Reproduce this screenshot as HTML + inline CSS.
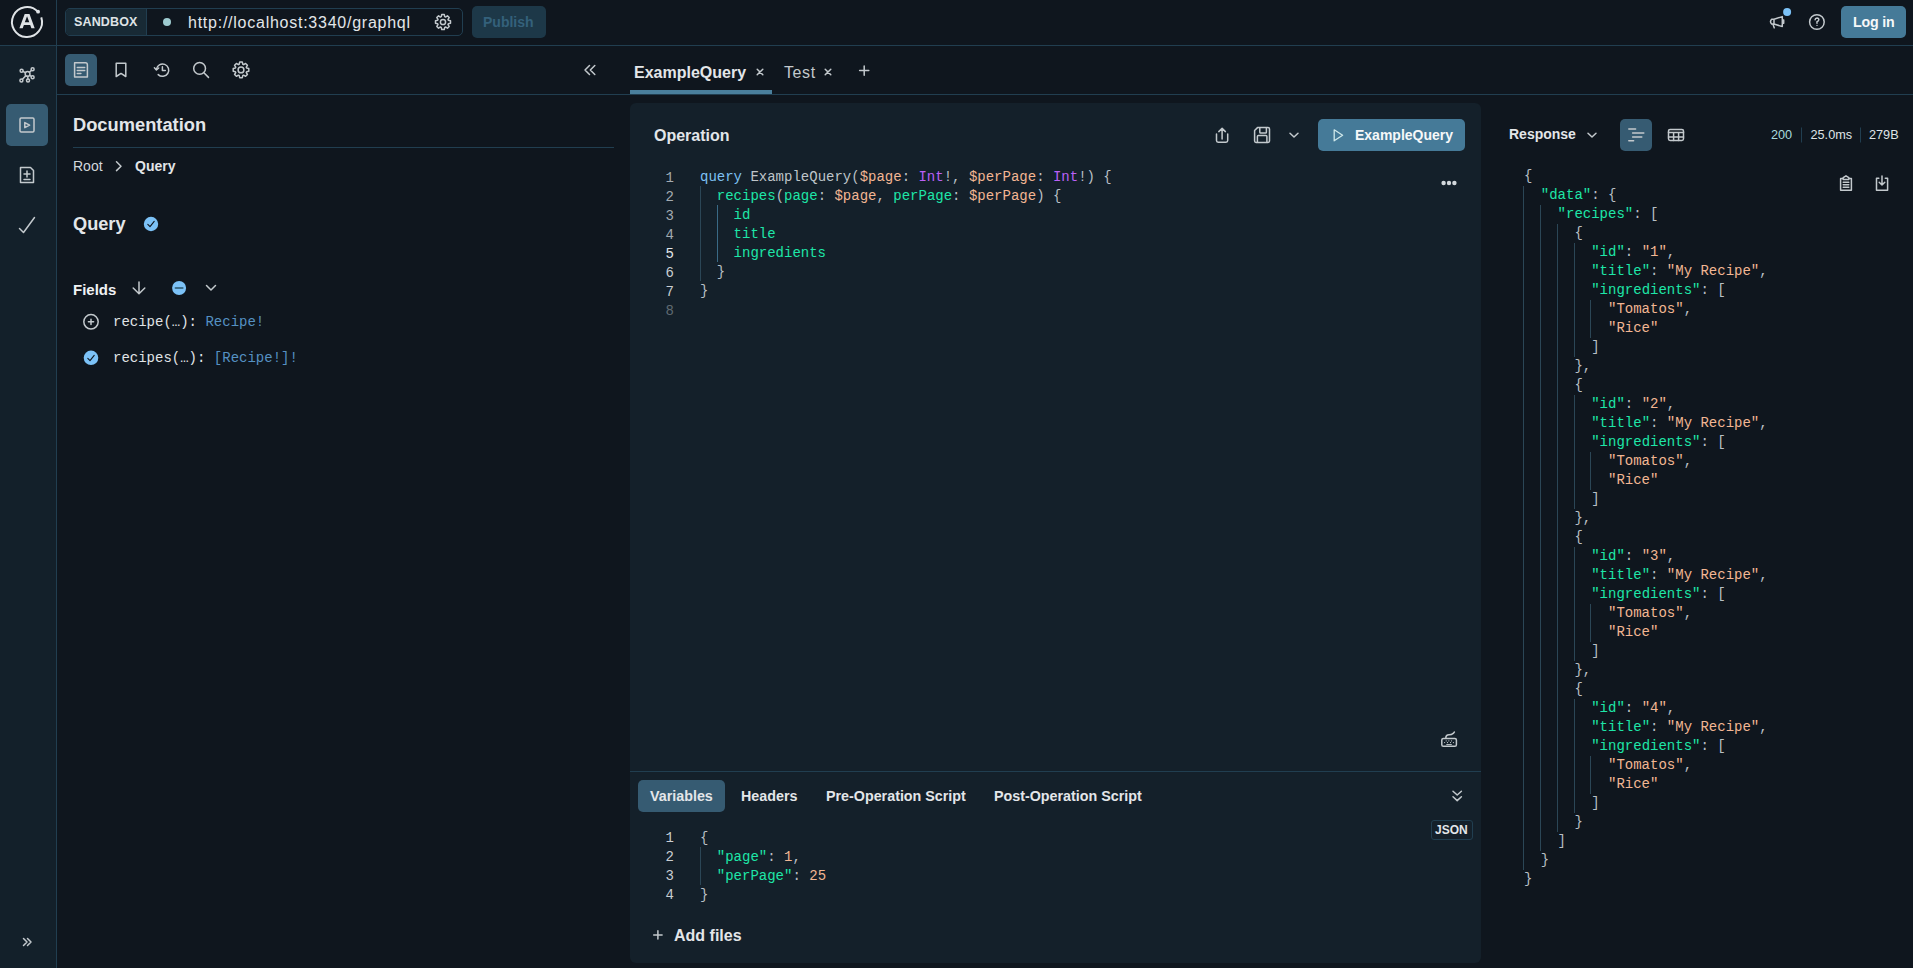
<!DOCTYPE html>
<html><head><meta charset="utf-8">
<style>
*{box-sizing:border-box;margin:0;padding:0}
html,body{width:1913px;height:968px;overflow:hidden;background:#0f161e;font-family:"Liberation Sans",sans-serif;color:#dfe3e6}
.a{position:absolute;white-space:pre}
.m{font-family:"Liberation Mono",monospace;font-size:14px;line-height:19px}
svg{position:absolute;overflow:visible}
.s{fill:none;stroke:#c3c9cd;stroke-width:1.5;stroke-linecap:round;stroke-linejoin:round}
</style></head><body>

<div class="a" style="left:0;top:46px;width:56px;height:922px;background:#13202a"></div>
<div class="a" style="left:56px;top:0;width:1px;height:968px;background:#213e50"></div>
<div class="a" style="left:0;top:45px;width:1913px;height:1px;background:#213e50"></div>
<div class="a" style="left:57px;top:94px;width:1856px;height:1px;background:#213e50"></div>
<svg width="1913" height="968" style="left:0;top:0"><path d="M41.27 17.36 A15 15 0 1 1 37.97 11.77" fill="none" stroke="#dfe3e6" stroke-width="2"/><circle cx="38.1" cy="11.7" r="1.9" fill="#dfe3e6"/><path fill="#dfe3e6" fill-rule="evenodd" d="M19.4 28.3 L24.7 13.9 L29.5 13.9 L34.7 28.3 L31.4 28.3 L30.2 24.9 L23.9 24.9 L22.7 28.3 Z M24.8 22.3 L29.3 22.3 L27.05 16.2 Z"/><line class="s" x1="25.48" y1="72.77" x2="23.01" y2="71.45" stroke-width="0.82"/><circle class="s" cx="21.6" cy="70.7" r="1.5" stroke-width="0.82"/><line class="s" x1="29.37" y1="72.28" x2="31.42" y2="70.38" stroke-width="0.82"/><circle class="s" cx="32.6" cy="69.3" r="1.5" stroke-width="0.82"/><line class="s" x1="29.58" y1="75.25" x2="31.28" y2="76.40" stroke-width="0.82"/><circle class="s" cx="32.6" cy="77.3" r="1.5" stroke-width="0.82"/><line class="s" x1="25.94" y1="75.64" x2="22.50" y2="79.24" stroke-width="0.82"/><circle class="s" cx="21.4" cy="80.4" r="1.5" stroke-width="0.82"/><line class="s" x1="27.74" y1="76.30" x2="27.90" y2="79.00" stroke-width="0.82"/><circle class="s" cx="28" cy="80.6" r="1.5" stroke-width="0.82"/><circle class="s" cx="27.6" cy="73.9" r="2.4" stroke-width="0.94"/><rect x="6" y="104" width="42" height="42" rx="5" fill="#365b72"/><rect class="s" x="20" y="118" width="14" height="14" rx="1.2" stroke-width="1.48"/><path class="s" d="M24.8 122.6 L29.6 125.1 L24.8 127.6 Z" stroke-width="1.15"/><path class="s" d="M20.5 167.5 H30.5 L33.5 170.5 V182.5 H20.5 Z" stroke-width="1.15"/><path class="s" d="M27 171 V177 M24 174 H30 M24 179.5 H30" stroke-width="1.15"/><path class="s" d="M19.5 228.5 L23.5 232.5 L34.5 217.5" stroke-width="1.15"/><path class="s" d="M23.5 938.5 L27 942 L23.5 945.5 M27.5 938.5 L31 942 L27.5 945.5" stroke="#a3aaaf" stroke-width="1.23"/><path class="s" d="M441.27 16.67 L441.75 14.50 L444.25 14.50 L444.73 16.67 L445.54 17.01 L447.42 15.82 L449.18 17.58 L447.99 19.46 L448.33 20.27 L450.50 20.75 L450.50 23.25 L448.33 23.73 L447.99 24.54 L449.18 26.42 L447.42 28.18 L445.54 26.99 L444.73 27.33 L444.25 29.50 L441.75 29.50 L441.27 27.33 L440.46 26.99 L438.58 28.18 L436.82 26.42 L438.01 24.54 L437.67 23.73 L435.50 23.25 L435.50 20.75 L437.67 20.27 L438.01 19.46 L436.82 17.58 L438.58 15.82 L440.46 17.01Z" stroke-width="1.07"/><circle class="s" cx="443" cy="22" r="2.6" stroke-width="1.07"/><path class="s" d="M1774 19.2 L1782.3 16.6 V26.6 L1774 24 Z M1774 19.2 H1771.6 Q1769.4 21.6 1771.6 24 H1774 M1772.9 24 L1774.2 27.8 M1782.3 20 H1783.7 V23.2 H1782.3" stroke-width="0.94"/><circle cx="1787.1" cy="12" r="4" fill="#7cc2f7"/><circle class="s" cx="1816.9" cy="22" r="7.3" stroke-width="1.07"/><path class="s" d="M1815.1 19.8 Q1815.2 18 1817 18 Q1818.9 18.1 1818.8 19.7 Q1818.7 20.9 1817 21.7 V23.2" stroke-width="0.90"/><circle cx="1817" cy="25.4" r="0.7" fill="#c3c9cd"/><rect x="65" y="54" width="32" height="32" rx="5" fill="#365b72"/><path class="s" d="M74.6 62.8 H85.5 Q87.4 62.8 87.4 65 V76.9 H74.6 Z" stroke-width="1.07"/><path class="s" d="M77.3 67.6 H84.7 M77.3 70.5 H84.7 M77.3 73.5 H80.9" stroke-width="0.90"/><path class="s" d="M116.2 63.3 H125.8 V76.5 L121 73.4 L116.2 76.5 Z" stroke-width="1.07"/><path class="s" d="M156.4 69.2 A6.2 6.2 0 1 1 158.2 74.6" stroke-width="1.07"/><path class="s" d="M154.4 67.8 L156.4 70 L158.7 68" stroke-width="1.07"/><path class="s" d="M162.4 66.8 V70.4 H165.3" stroke-width="1.07"/><circle class="s" cx="199.6" cy="68.4" r="5.9" stroke-width="1.07"/><path class="s" d="M203.9 72.8 L208.5 77.4" stroke-width="1.07"/><path class="s" d="M239.18 64.29 L239.70 62.11 L242.30 62.11 L242.82 64.29 L243.68 64.64 L245.59 63.47 L247.43 65.31 L246.26 67.22 L246.61 68.08 L248.79 68.60 L248.79 71.20 L246.61 71.72 L246.26 72.58 L247.43 74.49 L245.59 76.33 L243.68 75.16 L242.82 75.51 L242.30 77.69 L239.70 77.69 L239.18 75.51 L238.32 75.16 L236.41 76.33 L234.57 74.49 L235.74 72.58 L235.39 71.72 L233.21 71.20 L233.21 68.60 L235.39 68.08 L235.74 67.22 L234.57 65.31 L236.41 63.47 L238.32 64.64Z" stroke-width="1.07"/><circle class="s" cx="241" cy="69.9" r="2.9" stroke-width="1.07"/><path class="s" d="M589.5 65.5 L585 70 L589.5 74.5 M594.8 65.5 L590.3 70 L594.8 74.5" stroke-width="1.15"/><path class="s" d="M757.2 69.2 L762.8 74.8 M762.8 69.2 L757.2 74.8" stroke-width="0.98"/><path class="s" d="M825.2 69.2 L830.8 74.8 M830.8 69.2 L825.2 74.8" stroke-width="0.98"/><path class="s" d="M864.2 66 V75.2 M859.6 70.6 H868.8" stroke-width="1.15"/><path class="s" d="M116.5 161.8 L121 166.2 L116.5 170.6" stroke-width="0.90"/><circle cx="151" cy="224" r="7.2" fill="#7cc2f7"/><path d="M147.8 224.4 L150 226.6 L154.2 221.4" fill="none" stroke="#0f161e" stroke-width="1.1" stroke-linecap="round" stroke-linejoin="round"/><path class="s" d="M139 282 V293.5 M133.2 288 L139 293.7 L144.8 288" stroke-width="1.07"/><circle cx="179.1" cy="288" r="7" fill="#7cc2f7"/><path d="M175.5 288 H182.7" stroke="#3d6f8c" stroke-width="1.8" stroke-linecap="round"/><path class="s" d="M206.5 285.5 L211 290 L215.5 285.5" stroke-width="1.07"/><circle class="s" cx="91" cy="321.8" r="7.2" stroke="#b9c0c4" stroke-width="0.94"/><path class="s" d="M91 319.2 V324.4 M88.4 321.8 H93.6" stroke="#a3abb0" stroke-width="1.23"/><circle cx="91" cy="357.8" r="7.3" fill="#7cc2f7"/><path d="M87.8 358.4 L90 360.6 L94.2 355.4" fill="none" stroke="#0f161e" stroke-width="1.1" stroke-linecap="round" stroke-linejoin="round"/></svg>
<div class="a" style="left:65px;top:8px;width:398px;height:28px;border:1px solid #213e50;border-radius:5px;overflow:hidden"><div class="a" style="left:0;top:0;width:81px;height:26px;background:#182a35;border-right:1px solid #213e50"></div></div>
<div class="a" style="left:74px;top:14.5px;font-size:12.5px;font-weight:bold;letter-spacing:0.15px;color:#dfe3e6">SANDBOX</div>
<div class="a" style="left:163px;top:18px;width:8px;height:8px;border-radius:50%;background:#9ecbd0"></div>
<div class="a" style="left:188px;top:14px;font-size:16px;letter-spacing:0.75px;color:#e3e6e9">http://localhost:3340/graphql</div>
<div class="a" style="left:472px;top:6px;width:74px;height:32px;background:#1d3848;border-radius:5px"></div>
<div class="a" style="left:483px;top:14px;font-size:14px;font-weight:bold;color:#34617b">Publish</div>
<div class="a" style="left:1841px;top:6px;width:65px;height:32px;background:#457a98;border-radius:5px"></div>
<div class="a" style="left:1853px;top:13.5px;font-size:14.2px;font-weight:bold;letter-spacing:-0.2px;color:#f6f8f9">Log in</div>
<div class="a" style="left:73px;top:114px;font-size:18.3px;font-weight:bold;color:#e3e6e9">Documentation</div>
<div class="a" style="left:73px;top:147px;width:541px;height:1px;background:#213e50"></div>
<div class="a" style="left:73px;top:158px;font-size:14px;color:#d3d8dc">Root</div>
<div class="a" style="left:135px;top:158px;font-size:14px;font-weight:bold;color:#e3e6e9">Query</div>
<div class="a" style="left:73px;top:214px;font-size:18.2px;font-weight:bold;color:#e3e6e9">Query</div>
<div class="a" style="left:73px;top:280.5px;font-size:15px;font-weight:bold;color:#f0f2f4">Fields</div>
<div class="a m" style="left:113px;top:313px;font-size:14px;color:#e0e4e7">recipe(…): <span style="color:#5591c2">Recipe!</span></div>
<div class="a m" style="left:113px;top:349px;font-size:14px;color:#e0e4e7">recipes(…): <span style="color:#5591c2">[Recipe!]!</span></div>
<div class="a" style="left:634px;top:64px;font-size:16px;font-weight:bold;color:#e3e6e9">ExampleQuery</div>
<div class="a" style="left:784px;top:64px;font-size:16px;letter-spacing:0.6px;color:#c3c9cd">Test</div>
<div class="a" style="left:630px;top:90px;width:142px;height:4px;background:#4a7f9c"></div>
<div class="a" style="left:630px;top:103px;width:851px;height:860px;background:#14202a;border-radius:6px"></div>
<div class="a" style="left:654px;top:126.5px;font-size:16px;font-weight:bold;color:#e3e6e9">Operation</div>
<div class="a" style="left:1318px;top:119px;width:147px;height:32px;background:#457a98;border-radius:5px"></div>
<div class="a" style="left:1355px;top:126.5px;font-size:14px;font-weight:bold;color:#f6f8f9">ExampleQuery</div>
<div class="a m" style="left:700px;top:168px"><span style="color:#7dc1f3">query</span><span style="color:#bfc5c9"> ExampleQuery</span><span style="color:#b8bfc4">(</span><span style="color:#f2b693">$page</span><span style="color:#b8bfc4">: </span><span style="color:#bb60f6">Int</span><span style="color:#b8bfc4">!, </span><span style="color:#f2b693">$perPage</span><span style="color:#b8bfc4">: </span><span style="color:#bb60f6">Int</span><span style="color:#b8bfc4">!) {</span>
  <span style="color:#1ee6a8">recipes</span><span style="color:#b8bfc4">(</span><span style="color:#1ee6a8">page</span><span style="color:#b8bfc4">: </span><span style="color:#f2b693">$page</span><span style="color:#b8bfc4">, </span><span style="color:#1ee6a8">perPage</span><span style="color:#b8bfc4">: </span><span style="color:#f2b693">$perPage</span><span style="color:#b8bfc4">) {</span>
    <span style="color:#1ee6a8">id</span>
    <span style="color:#1ee6a8">title</span>
    <span style="color:#1ee6a8">ingredients</span>
  <span style="color:#b8bfc4">}</span>
<span style="color:#b8bfc4">}</span>
</div>
<div class="a m" style="left:650px;top:169px;width:24px;text-align:right"><span style="color:#a3abb1">1</span>
<span style="color:#a3abb1">2</span>
<span style="color:#a3abb1">3</span>
<span style="color:#a3abb1">4</span>
<span style="color:#e3e7ea">5</span>
<span style="color:#c9ced2">6</span>
<span style="color:#c9ced2">7</span>
<span style="color:#5f6a71">8</span></div>
<div class="a" style="left:700px;top:186px;width:1px;height:95px;background:#2b4656"></div>
<div class="a" style="left:717px;top:205px;width:1px;height:57px;background:#3a6a86"></div>
<svg width="1913" height="968" style="left:0;top:0"><path class="s" d="M1216.5 134 V140.5 Q1216.5 142.2 1218.2 142.2 H1226 Q1227.7 142.2 1227.7 140.5 V134" stroke="#8f989d" stroke-width="1.07"/><path class="s" d="M1222.1 139 V128.6 M1218.8 131.6 L1222.1 128.4 L1225.4 131.6" stroke="#8f989d" stroke-width="1.07"/><path class="s" d="M1257.5 127.6 H1268 Q1269.5 127.6 1269.5 129.1 V141 Q1269.5 142.4 1268 142.4 H1256 Q1254.6 142.4 1254.6 141 V130.5 Z" stroke="#8f989d" stroke-width="1.15"/><path class="s" d="M1259.8 127.8 V132.2 Q1259.8 133 1260.6 133 H1265.6 Q1266.4 133 1266.4 132.2 V127.8 M1257.4 142.2 V136.5 Q1257.4 135.6 1258.3 135.6 H1266 Q1266.9 135.6 1266.9 136.5 V142.2" stroke="#8f989d" stroke-width="1.07"/><path class="s" d="M1290 133.2 L1294 137 L1298 133.2" stroke-width="0.98"/><path d="M1334.2 129.8 L1342.6 135.3 L1334.2 140.8 Z" fill="none" stroke="#cfe8ea" stroke-width="1.3" stroke-linejoin="round"/><circle cx="1443.6" cy="183" r="2.2" fill="#d3d8dc"/><circle cx="1449" cy="183" r="2.2" fill="#d3d8dc"/><circle cx="1454.4" cy="183" r="2.2" fill="#d3d8dc"/><rect class="s" x="1441.8" y="738.4" width="14.6" height="7.9" rx="1.6" stroke-width="1.07"/><rect x="1445.7" y="740.4" width="1" height="1" fill="#c3c9cd"/><rect x="1448.3" y="740.4" width="1" height="1" fill="#c3c9cd"/><rect x="1451.0" y="740.4" width="1" height="1" fill="#c3c9cd"/><rect x="1444.1" y="742.1" width="1" height="1" fill="#c3c9cd"/><rect x="1447.0" y="742.1" width="1" height="1" fill="#c3c9cd"/><rect x="1450.0" y="742.1" width="1" height="1" fill="#c3c9cd"/><rect x="1452.9" y="742.1" width="1" height="1" fill="#c3c9cd"/><path d="M1446.3 744.5 H1451.8" stroke="#c3c9cd" stroke-width="0.9"/><path class="s" d="M1445.8 738.2 Q1445.8 734.8 1449 734.8 Q1451.6 734.8 1453.2 733.4 L1454.4 732" stroke-width="0.90"/><path class="s" d="M1453 791.2 L1457.2 795 L1461.4 791.2 M1453 796.8 L1457.2 800.6 L1461.4 796.8" stroke-width="0.98"/><path class="s" d="M657.9 930.7 V939.1 M653.7 934.9 H662.1" stroke="#9aa2a8" stroke-width="1.07"/></svg>
<div class="a" style="left:630px;top:771px;width:851px;height:1px;background:#213e50"></div>
<div class="a" style="left:638px;top:780px;width:87px;height:32px;background:#365b72;border-radius:5px"></div>
<div class="a" style="left:650px;top:787.5px;font-size:14.3px;font-weight:bold;color:#e3e6e9">Variables</div>
<div class="a" style="left:741px;top:787.5px;font-size:14.3px;font-weight:bold;color:#e3e6e9">Headers</div>
<div class="a" style="left:826px;top:787.5px;font-size:14.3px;font-weight:bold;color:#e3e6e9">Pre-Operation Script</div>
<div class="a" style="left:994px;top:787.5px;font-size:14.3px;font-weight:bold;color:#e3e6e9">Post-Operation Script</div>
<div class="a" style="left:1430.5px;top:820px;width:42px;height:20px;border:1px solid #213e50;border-radius:3px"></div>
<div class="a" style="left:1435px;top:823px;font-size:12px;font-weight:bold;color:#e3e6e9">JSON</div>
<div class="a m" style="left:700px;top:828.5px"><span style="color:#b8bfc4">{</span>
  <span style="color:#1ee6a8">"page"</span><span style="color:#b8bfc4">: </span><span style="color:#f2b693">1</span><span style="color:#b8bfc4">,</span>
  <span style="color:#1ee6a8">"perPage"</span><span style="color:#b8bfc4">: </span><span style="color:#f2b693">25</span>
<span style="color:#b8bfc4">}</span></div>
<div class="a m" style="left:650px;top:828.5px;width:24px;text-align:right;color:#c9ced2">1
2
3
4</div>
<div class="a" style="left:700px;top:847px;width:1px;height:38px;background:#2b4656"></div>
<div class="a" style="left:674px;top:927px;font-size:16px;font-weight:bold;color:#e3e6e9">Add files</div>
<div class="a" style="left:1509px;top:126px;font-size:14px;font-weight:bold;color:#e3e6e9">Response</div>
<svg width="1913" height="968" style="left:0;top:0"><path class="s" d="M1588 133.2 L1592 137 L1596 133.2" stroke-width="0.98"/><rect x="1620" y="119" width="32" height="32" rx="5" fill="#365b72"/><path class="s" d="M1628.8 128.9 H1635.6 M1632.6 133 H1643.8 M1632.6 137 H1641.8 M1628.8 140.8 H1633.6" stroke-width="0.98" stroke-linecap="butt"/><rect class="s" x="1668.5" y="129.4" width="15" height="11" rx="1.6" stroke-width="0.98"/><path class="s" d="M1668.5 132.4 H1683.5 M1668.5 136.9 H1683.5 M1673.6 132.4 V140.4 M1678.6 132.4 V140.4" stroke-width="0.90"/><path d="M1801.5 127.5 V142.5 M1860.5 127.5 V142.5" stroke="#213e50" stroke-width="1"/><path class="s" d="M1843 178.5 H1840.6 V190.3 H1851.4 V178.5 H1849 M1843.2 179.6 V177.6 L1846 175.8 L1848.8 177.6 V179.6 Z" stroke-width="0.98"/><path class="s" d="M1843.2 182.3 H1848.8 M1843.2 184.8 H1848.8 M1843.2 187.3 H1848.8" stroke-width="0.90"/><path class="s" d="M1878.8 178.3 H1876.5 V190.3 H1887.6 V178.3 H1885.3" stroke-width="0.98"/><path class="s" d="M1882 176 V185 M1879.2 182.2 L1882 185 L1884.8 182.2" stroke-width="0.98"/></svg>
<div class="a" style="left:1771px;top:127.5px;font-size:12.7px;color:#a8dadd">200</div>
<div class="a" style="left:1810.5px;top:127.5px;font-size:12.7px;color:#dfe3e6">25.0ms</div>
<div class="a" style="left:1869px;top:127.5px;font-size:12.7px;color:#dfe3e6">279B</div>
<div class="a m" style="left:1524px;top:167px"><span style="color:#b8bfc4">{</span>
  <span style="color:#1ee6a8">"data"</span><span style="color:#b8bfc4">: {</span>
    <span style="color:#1ee6a8">"recipes"</span><span style="color:#b8bfc4">: [</span>
      <span style="color:#b8bfc4">{</span>
        <span style="color:#1ee6a8">"id"</span><span style="color:#b8bfc4">: </span><span style="color:#f2b693">"1"</span><span style="color:#b8bfc4">,</span>
        <span style="color:#1ee6a8">"title"</span><span style="color:#b8bfc4">: </span><span style="color:#f2b693">"My Recipe"</span><span style="color:#b8bfc4">,</span>
        <span style="color:#1ee6a8">"ingredients"</span><span style="color:#b8bfc4">: [</span>
          <span style="color:#f2b693">"Tomatos"</span><span style="color:#b8bfc4">,</span>
          <span style="color:#f2b693">"Rice"</span>
        <span style="color:#b8bfc4">]</span>
      <span style="color:#b8bfc4">},</span>
      <span style="color:#b8bfc4">{</span>
        <span style="color:#1ee6a8">"id"</span><span style="color:#b8bfc4">: </span><span style="color:#f2b693">"2"</span><span style="color:#b8bfc4">,</span>
        <span style="color:#1ee6a8">"title"</span><span style="color:#b8bfc4">: </span><span style="color:#f2b693">"My Recipe"</span><span style="color:#b8bfc4">,</span>
        <span style="color:#1ee6a8">"ingredients"</span><span style="color:#b8bfc4">: [</span>
          <span style="color:#f2b693">"Tomatos"</span><span style="color:#b8bfc4">,</span>
          <span style="color:#f2b693">"Rice"</span>
        <span style="color:#b8bfc4">]</span>
      <span style="color:#b8bfc4">},</span>
      <span style="color:#b8bfc4">{</span>
        <span style="color:#1ee6a8">"id"</span><span style="color:#b8bfc4">: </span><span style="color:#f2b693">"3"</span><span style="color:#b8bfc4">,</span>
        <span style="color:#1ee6a8">"title"</span><span style="color:#b8bfc4">: </span><span style="color:#f2b693">"My Recipe"</span><span style="color:#b8bfc4">,</span>
        <span style="color:#1ee6a8">"ingredients"</span><span style="color:#b8bfc4">: [</span>
          <span style="color:#f2b693">"Tomatos"</span><span style="color:#b8bfc4">,</span>
          <span style="color:#f2b693">"Rice"</span>
        <span style="color:#b8bfc4">]</span>
      <span style="color:#b8bfc4">},</span>
      <span style="color:#b8bfc4">{</span>
        <span style="color:#1ee6a8">"id"</span><span style="color:#b8bfc4">: </span><span style="color:#f2b693">"4"</span><span style="color:#b8bfc4">,</span>
        <span style="color:#1ee6a8">"title"</span><span style="color:#b8bfc4">: </span><span style="color:#f2b693">"My Recipe"</span><span style="color:#b8bfc4">,</span>
        <span style="color:#1ee6a8">"ingredients"</span><span style="color:#b8bfc4">: [</span>
          <span style="color:#f2b693">"Tomatos"</span><span style="color:#b8bfc4">,</span>
          <span style="color:#f2b693">"Rice"</span>
        <span style="color:#b8bfc4">]</span>
      <span style="color:#b8bfc4">}</span>
    <span style="color:#b8bfc4">]</span>
  <span style="color:#b8bfc4">}</span>
<span style="color:#b8bfc4">}</span></div>
<div class="a" style="left:1574.0px;top:243.0px;width:1px;height:114px;background:#2b4656"></div>
<div class="a" style="left:1590.0px;top:300.0px;width:1px;height:38px;background:#2b4656"></div>
<div class="a" style="left:1574.0px;top:395.0px;width:1px;height:114px;background:#2b4656"></div>
<div class="a" style="left:1590.0px;top:452.0px;width:1px;height:38px;background:#2b4656"></div>
<div class="a" style="left:1574.0px;top:547.0px;width:1px;height:114px;background:#2b4656"></div>
<div class="a" style="left:1590.0px;top:604.0px;width:1px;height:38px;background:#2b4656"></div>
<div class="a" style="left:1574.0px;top:699.0px;width:1px;height:114px;background:#2b4656"></div>
<div class="a" style="left:1590.0px;top:756.0px;width:1px;height:38px;background:#2b4656"></div>
<div class="a" style="left:1523.0px;top:186.0px;width:1px;height:684px;background:#2b4656"></div>
<div class="a" style="left:1540.0px;top:205.0px;width:1px;height:646px;background:#2b4656"></div>
<div class="a" style="left:1557.0px;top:224.0px;width:1px;height:608px;background:#2b4656"></div>
</body></html>
